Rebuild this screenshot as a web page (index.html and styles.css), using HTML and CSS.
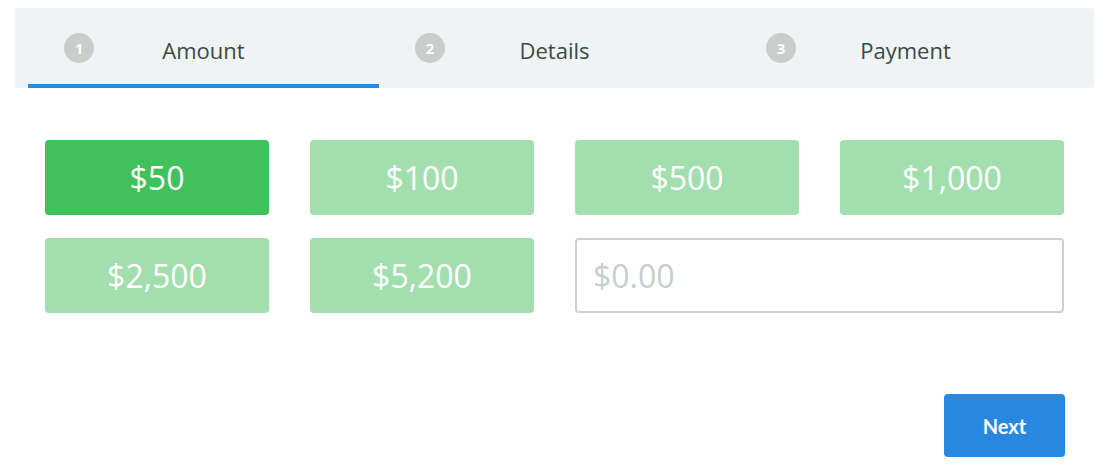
FILE: index.html
```html
<!DOCTYPE html>
<html>
<head>
<meta charset="utf-8">
<link rel="stylesheet" href="styles.css">
</head>
<body>
<div class="page">
  <div class="tabs">
    <div class="tab active"><span class="num">1</span><span class="label">Amount</span></div>
    <div class="tab"><span class="num">2</span><span class="label">Details</span></div>
    <div class="tab"><span class="num">3</span><span class="label">Payment</span></div>
  </div>
  <div class="amounts">
    <button class="amt selected">$50</button>
    <button class="amt">$100</button>
    <button class="amt">$500</button>
    <button class="amt">$1,000</button>
    <button class="amt">$2,500</button>
    <button class="amt">$5,200</button>
    <input class="custom" type="text" placeholder="$0.00">
  </div>
  <div class="footer">
    <button class="next">Next</button>
  </div>
</div>
</body>
</html>
```
FILE: styles.css
```css
html, body {
  margin: 0;
  padding: 0;
  background: #ffffff;
}
body {
  font-family: "Open Sans", "Noto Sans", sans-serif;
}
.page {
  padding: 8px 8px 0 15px;
}
.tabs {
  display: flex;
  height: 80px;
  box-sizing: border-box;
  padding: 0 13px;
  background: #f0f3f3;
  border-radius: 4px;
}
.tab {
  flex: 1;
  display: grid;
  grid-template-columns: 1fr auto 1fr;
  align-items: center;
  box-sizing: border-box;
  padding-top: 8px;
  border-bottom: 4px solid transparent;
}
.tab.active {
  border-bottom-color: #2a8ae0;
}
.num {
  justify-self: start;
  margin-left: 36px;
  width: 30px;
  height: 30px;
  border-radius: 50%;
  background: #c9cdcb;
  color: #ffffff;
  font-size: 15px;
  font-weight: 700;
  display: flex;
  align-items: center;
  justify-content: center;
  margin-top: -4px;
}
.label {
  grid-column: 2;
  font-size: 22px;
  color: #3b4a43;
}
.amounts {
  display: grid;
  grid-template-columns: repeat(4, 1fr);
  grid-auto-rows: 75px;
  column-gap: 41px;
  row-gap: 23px;
  margin: 52px 30px 0 30px;
}
.amt {
  border: none;
  border-radius: 4px;
  background: #a3dfae;
  color: #ffffff;
  font-family: "Open Sans", "Noto Sans", sans-serif;
  font-size: 32px;
  padding: 0;
}
.amt.selected {
  background: #40c15c;
}
.custom {
  grid-column: span 2;
  box-sizing: border-box;
  border: 2px solid #c8d3cf;
  border-radius: 4px;
  padding: 0 16px;
  font-family: "Open Sans", "Noto Sans", sans-serif;
  font-size: 32px;
  color: #333;
  outline: none;
}
.custom::placeholder {
  color: #c5cfcb;
}
.footer {
  display: flex;
  justify-content: flex-end;
  margin: 81px 29px 0 30px;
}
.next {
  width: 121px;
  height: 63px;
  border: none;
  border-radius: 4px;
  background: #2888e0;
  color: #ffffff;
  font-family: "Lato", "Open Sans", sans-serif;
  font-weight: 700;
  font-size: 20px;
}
```
